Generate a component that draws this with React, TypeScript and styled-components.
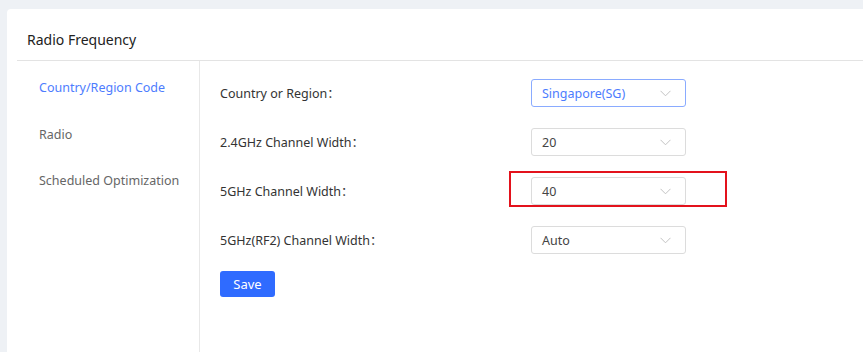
import React from "react";
import styled, { createGlobalStyle } from "styled-components";

const Global = createGlobalStyle`
  html, body { margin: 0; padding: 0; background: #eef1f5; overflow: hidden; }
  body { font-family: "Noto Sans", "Noto Sans CJK SC", Arial, sans-serif; }
  #root { width: 863px; height: 352px; }
`;

const Page = styled.div`
  width: 863px;
  height: 352px;
  padding: 9px 0 0 7px;
  box-sizing: border-box;
  overflow: hidden;
`;

const Card = styled.div`
  width: 880px;
  height: 360px;
  background: #fff;
  border-radius: 4px;
  padding: 0 0 0 10px;
  box-sizing: border-box;
  display: flex;
  flex-direction: column;
`;

const Header = styled.div`
  height: 52px;
  box-sizing: border-box;
  padding: 21px 0 0 10px;
  font-size: 14px;
  line-height: 20px;
  color: #222;
  border-bottom: 1px solid #e3e3e3;
`;

const Body = styled.div`
  flex: 1;
  display: flex;
`;

const Nav = styled.div`
  width: 182px;
  border-right: 1px solid #e8e8e8;
  padding-top: 4px;
  display: flex;
  flex-direction: column;
`;

const NavItem = styled.div<{ $active?: boolean }>`
  padding: 13px 0 13.5px 22px;
  font-size: 12.5px;
  line-height: 20px;
  color: ${(p) => (p.$active ? "#4d7cfe" : "#666")};
`;

const Form = styled.div`
  padding: 18px 0 0 20px;
  display: flex;
  flex-direction: column;
`;

const Grid = styled.div`
  display: grid;
  grid-template-columns: 311px 155px;
  grid-auto-rows: 28px;
  row-gap: 21px;
  align-items: center;
`;

const Label = styled.div`
  font-size: 12.5px;
  color: #333;
  line-height: 20px;
  padding-top: 2px;
`;

const SelectWrap = styled.div`
  position: relative;
  height: 28px;
`;

const Select = styled.div<{ $focus?: boolean }>`
  height: 28px;
  box-sizing: border-box;
  border: 1px solid ${(p) => (p.$focus ? "#8aabff" : "#dcdcdc")};
  border-radius: 3px;
  padding: 0 14px 0 10px;
  display: flex;
  align-items: center;
  justify-content: space-between;
  font-size: 12.5px;
  color: ${(p) => (p.$focus ? "#4d7cfe" : "#444")};
`;

const Highlight = styled.div`
  position: absolute;
  left: -22px;
  top: -6px;
  width: 218px;
  height: 36px;
  box-sizing: border-box;
  border: 2px solid #e3121c;
  pointer-events: none;
`;

const SaveButton = styled.button`
  margin-top: 17px;
  width: 55px;
  height: 26px;
  border: none;
  border-radius: 3px;
  background: #2f6bff;
  color: #fff;
  font-family: inherit;
  font-size: 13px;
  padding: 0;
`;

const Chevron = () => (
  <svg width="11" height="7" viewBox="0 0 11 7" fill="none">
    <path d="M0.5 0.8 L5.5 5.8 L10.5 0.8" stroke="#c3c3c3" strokeWidth="1" />
  </svg>
);

const rows = [
  { label: "Country or Region：", value: "Singapore(SG)", focus: true },
  { label: "2.4GHz Channel Width：", value: "20" },
  { label: "5GHz Channel Width：", value: "40", highlight: true },
  { label: "5GHz(RF2) Channel Width：", value: "Auto" },
];

export default function App() {
  return (
    <>
      <Global />
      <Page>
        <Card>
          <Header>Radio Frequency</Header>
          <Body>
            <Nav>
              <NavItem $active>Country/Region Code</NavItem>
              <NavItem>Radio</NavItem>
              <NavItem>Scheduled Optimization</NavItem>
            </Nav>
            <Form>
              <Grid>
                {rows.map((r) => (
                  <React.Fragment key={r.label}>
                    <Label>{r.label}</Label>
                    <SelectWrap>
                      <Select $focus={r.focus}>
                        <span>{r.value}</span>
                        <Chevron />
                      </Select>
                      {r.highlight && <Highlight />}
                    </SelectWrap>
                  </React.Fragment>
                ))}
              </Grid>
              <div>
                <SaveButton>Save</SaveButton>
              </div>
            </Form>
          </Body>
        </Card>
      </Page>
    </>
  );
}
